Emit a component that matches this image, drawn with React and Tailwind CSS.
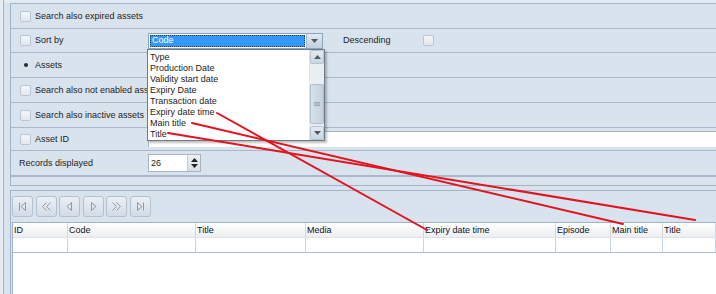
import React from "react";

const sortFields = [
  "Type",
  "Production Date",
  "Validity start date",
  "Expiry Date",
  "Transaction date",
  "Expiry date time",
  "Main title",
  "Title",
];

const columns = [
  { name: "ID", w: "w-[55px]" },
  { name: "Code", w: "w-[128px]" },
  { name: "Title", w: "w-[110px]" },
  { name: "Media", w: "w-[118px]" },
  { name: "Expiry date time", w: "w-[132px]" },
  { name: "Episode", w: "w-[55px]" },
  { name: "Main title", w: "w-[52px]" },
  { name: "Title", w: "flex-1" },
];

function Check() {
  return (
    <span className="w-[11px] h-[11px] shrink-0 rounded-[2px] border border-[#b9c6d3] bg-gradient-to-b from-[#f4f6f8] to-[#e3e8ee]" />
  );
}

function Row({ h, children, last }) {
  return (
    <div className={`${h} flex items-center ${last ? "" : "border-b border-[#a7b9cb]"}`}>
      {children}
    </div>
  );
}

function PagerIcon({ kind }) {
  const s = { stroke: "#8f99a3", strokeWidth: 1, fill: "none" };
  return (
    <svg width="11" height="11" viewBox="0 0 11 11">
      {kind === "first" && (
        <>
          <path d="M2.5 1.5v8" {...s} />
          <path d="M8.5 1.5L4 5.5l4.5 4z" {...s} />
        </>
      )}
      {kind === "prevPage" && (
        <>
          <path d="M5.5 1.5L1.5 5.5l4 4M9.5 1.5L5.5 5.5l4 4" {...s} />
        </>
      )}
      {kind === "prev" && <path d="M7.5 1.5L3 5.5l4.5 4z" {...s} />}
      {kind === "next" && <path d="M3.5 1.5L8 5.5l-4.5 4z" {...s} />}
      {kind === "nextPage" && (
        <path d="M1.5 1.5l4 4-4 4M5.5 1.5l4 4-4 4" {...s} />
      )}
      {kind === "last" && (
        <>
          <path d="M2.5 1.5L7 5.5l-4.5 4z" {...s} />
          <path d="M8.5 1.5v8" {...s} />
        </>
      )}
    </svg>
  );
}

export default function App() {
  return (
    <div className="relative w-[716px] h-[294px] overflow-hidden flex bg-[#d9e3ed] text-[9px] leading-none text-[#1c1c1c] font-['Liberation_Sans',Arial,sans-serif]">
      <div className="w-[4px] shrink-0 bg-[#e5ecf3] border-r border-[#9fb3c7]" />
      <div className="flex-1 flex flex-col">
        <div className="h-[3px] bg-[#e3eaf2]" />
        {/* filter panel */}
        <div className="ml-[6px] border-l border-t border-b border-[#a2b5c8] flex flex-col">
          <Row h="h-[25px]">
            <div className="pl-[9px] flex items-center gap-[4px]">
              <Check />
              <span>Search also expired assets</span>
            </div>
          </Row>
          <Row h="h-[24px]">
            <div className="w-[137px] pl-[9px] flex items-center gap-[4px]">
              <Check />
              <span>Sort by</span>
            </div>
            <div className="w-[175px] h-[16px] flex border border-[#8ea4bb] bg-white">
              <div className="flex-1 m-[1px] bg-[#3399ff] text-white pl-[1px] flex items-center border border-dotted border-[#1b3f66]">
                Code
              </div>
              <div className="w-[16px] flex items-center justify-center bg-gradient-to-b from-[#e2e9f0] to-[#c4d0dc] border-l border-[#a6b6c6]">
                <svg width="7" height="4" viewBox="0 0 7 4">
                  <path d="M0 0h7L3.5 4z" fill="#4d5a66" />
                </svg>
              </div>
            </div>
            <span className="ml-[20px] w-[80px]">Descending</span>
            <Check />
          </Row>
          <Row h="h-[25px]">
            <div className="pl-[9px] flex items-center gap-[4px]">
              <span className="w-[11px] h-[11px] flex items-center justify-center">
                <span className="w-[4px] h-[4px] rounded-full bg-[#2a2a2a]" />
              </span>
              <span>Assets</span>
            </div>
          </Row>
          <Row h="h-[25px]">
            <div className="pl-[9px] flex items-center gap-[4px]">
              <Check />
              <span>Search also not enabled assets</span>
            </div>
          </Row>
          <Row h="h-[25px]">
            <div className="pl-[9px] flex items-center gap-[4px]">
              <Check />
              <span>Search also inactive assets</span>
            </div>
          </Row>
          <Row h="h-[23px]">
            <div className="w-[137px] pl-[9px] flex items-center gap-[4px]">
              <Check />
              <span>Asset ID</span>
            </div>
            <div className="flex-1 h-[16px] bg-white border-t border-l border-[#abb3bd]" />
          </Row>
          <Row h="h-[25px]">
            <div className="w-[137px] pl-[8px]">Records displayed</div>
            <div className="w-[53px] h-[18px] flex bg-white border border-[#abb3bd]">
              <span className="flex-1 pl-[2px] flex items-center">26</span>
              <div className="w-[13px] flex flex-col items-center justify-center gap-[2px] bg-gradient-to-b from-[#eef2f6] to-[#d6dee6] border-l border-[#c3ccd6]">
                <svg width="7" height="4" viewBox="0 0 7 4">
                  <path d="M0 4h7L3.5 0z" fill="#222" />
                </svg>
                <svg width="7" height="4" viewBox="0 0 7 4">
                  <path d="M0 0h7L3.5 4z" fill="#222" />
                </svg>
              </div>
            </div>
          </Row>
          <div className="h-[9px] border-t border-[#a7b9cb]" />
        </div>

        {/* results panel */}
        <div className="flex-1 mt-[4px] ml-[6px] border-l border-t border-[#a2b5c8] flex flex-col pl-[1px] pt-[5px]">
          <div className="flex gap-[2.5px]">
            {["first", "prevPage", "prev", "next", "nextPage", "last"].map((k) => (
              <div
                key={k}
                className="w-[21px] h-[21px] rounded-[3px] border border-[#b3c0cd] bg-gradient-to-b from-[#eaeff4] to-[#d3dce5] flex items-center justify-center"
              >
                <PagerIcon kind={k} />
              </div>
            ))}
          </div>
          <div className="flex-1 mt-[5px] bg-white border-l border-t border-[#9fb3c7] flex flex-col">
            <div className="h-[15px] flex bg-gradient-to-b from-[#ffffff] to-[#eceef1] border-b border-[#dfe3e8]">
              {columns.map((c, i) => (
                <div
                  key={i}
                  className={`${c.w} shrink-0 pl-[1px] flex items-center border-r border-[#d4d9df] text-[#111]`}
                >
                  {c.name}
                </div>
              ))}
            </div>
            <div className="h-[15px] flex border-b border-[#a9bfd5]">
              {columns.map((c, i) => (
                <div key={i} className={`${c.w} shrink-0 border-r border-[#c9d7e5]`} />
              ))}
            </div>
          </div>
        </div>
      </div>

      {/* open dropdown list */}
      <div className="absolute left-[147px] top-[49px] w-[178px] h-[92px] bg-white border border-[#6d7a87] shadow-[2px_2px_2px_rgba(0,0,0,0.25)] flex">
        <div className="flex-1 pt-[2px] pl-[2px] flex flex-col">
          {sortFields.map((f) => (
            <div key={f} className="h-[11px] flex items-center">
              {f}
            </div>
          ))}
        </div>
        <div className="w-[15px] flex flex-col bg-[#e9eef3] border-l border-[#dfe5eb]">
          <div className="h-[14px] flex items-center justify-center bg-gradient-to-b from-[#e4eaf0] to-[#cdd7e1] border border-[#b6c3d0] rounded-[2px]">
            <svg width="7" height="4" viewBox="0 0 7 4">
              <path d="M0 4h7L3.5 0z" fill="#4d5a66" />
            </svg>
          </div>
          <div className="h-[20px]" />
          <div className="h-[40px] flex items-center justify-center bg-gradient-to-r from-[#d8e1ea] to-[#c3d0dd] border border-[#aebccb] rounded-[2px]">
            <svg width="6" height="4" viewBox="0 0 6 4">
              <path d="M0 0.5h6M0 2h6M0 3.5h6" stroke="#8c9aa8" strokeWidth="0.8" />
            </svg>
          </div>
          <div className="flex-1" />
          <div className="h-[14px] flex items-center justify-center bg-gradient-to-b from-[#e4eaf0] to-[#cdd7e1] border border-[#b6c3d0] rounded-[2px]">
            <svg width="7" height="4" viewBox="0 0 7 4">
              <path d="M0 0h7L3.5 4z" fill="#4d5a66" />
            </svg>
          </div>
        </div>
      </div>

      {/* red annotation lines */}
      <svg className="absolute inset-0 pointer-events-none" width="716" height="294">
        <g stroke="#e3131f" strokeWidth="2" strokeLinecap="round">
          <line x1="217" y1="113" x2="427" y2="230" />
          <line x1="192" y1="123" x2="623" y2="224" />
          <line x1="168" y1="133" x2="695" y2="220" />
        </g>
      </svg>
    </div>
  );
}
